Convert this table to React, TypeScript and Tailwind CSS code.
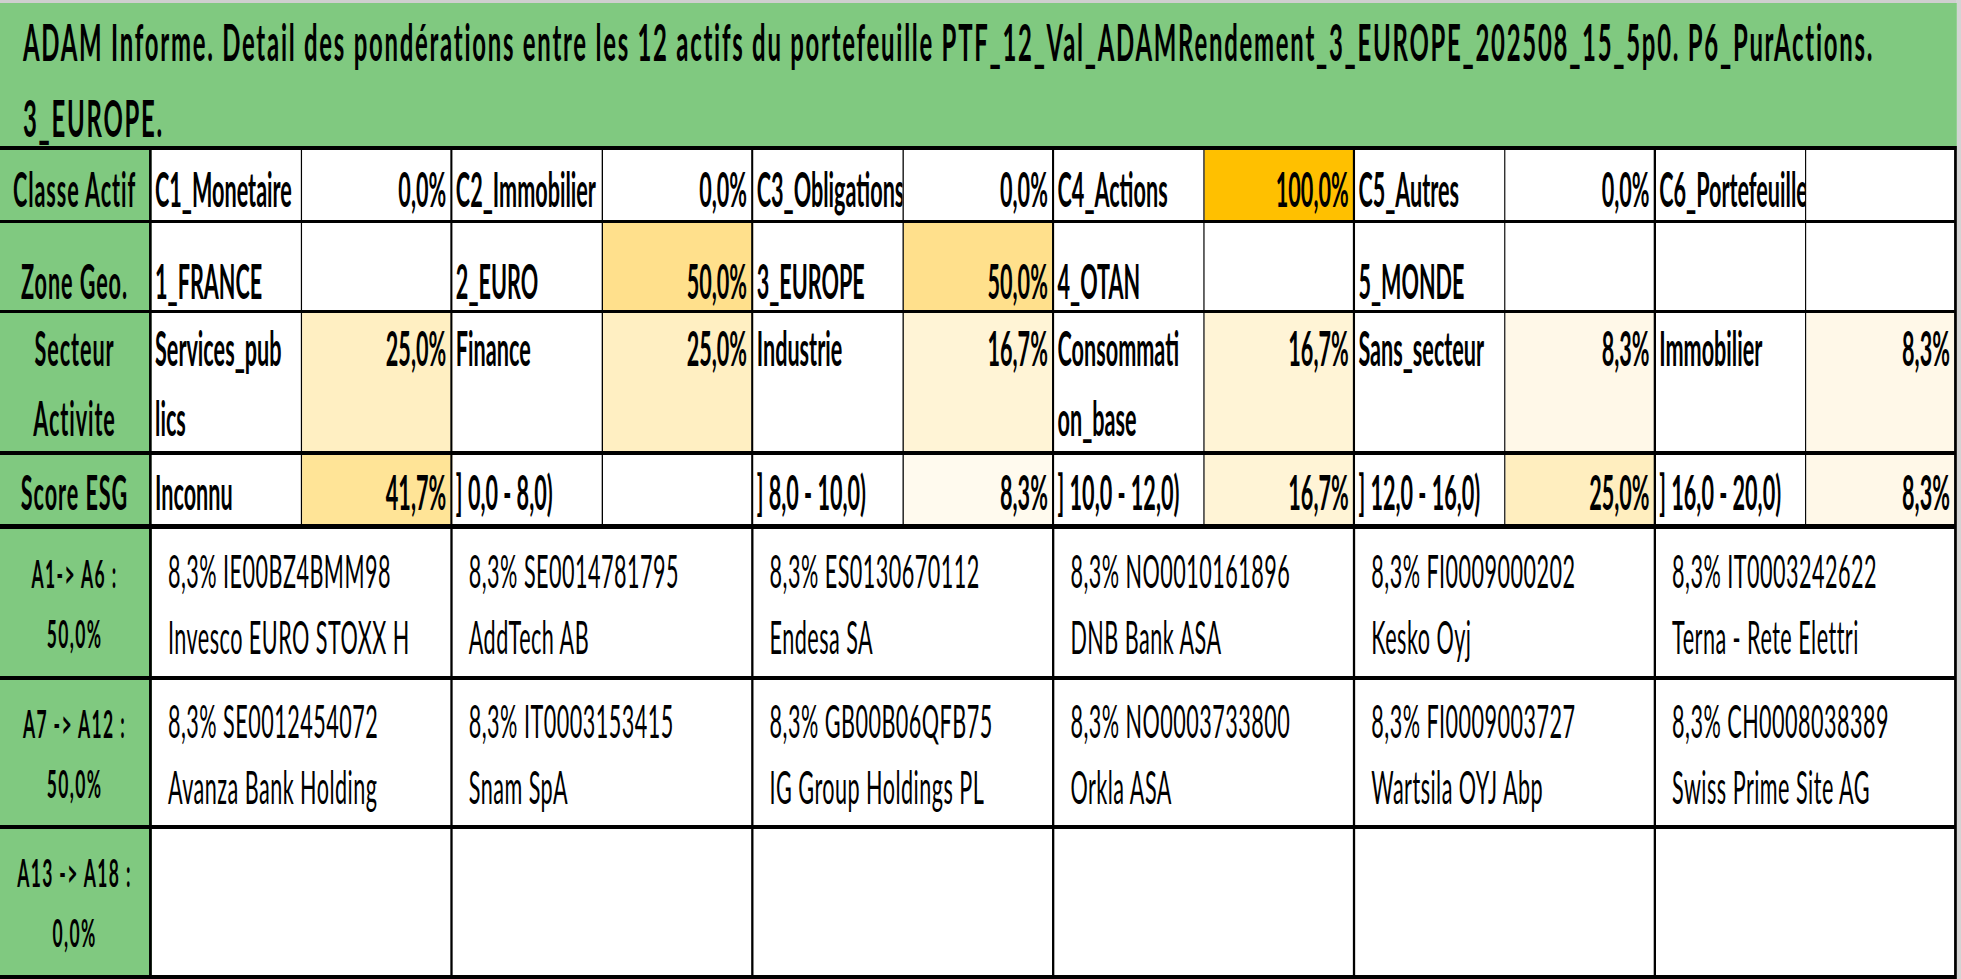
const font = "[font-family:Lato,'Open_Sans',sans-serif]";

type Pair = { name: string[]; value: string; bg: string };

const rows: { label: string[]; h: string; align: string; pairs: Pair[] }[] = [
  {
    label: ["Classe Actif"],
    h: "h-[73px] border-b-[3px]",
    align: "items-end pb-[3px] leading-[1.2]",
    pairs: [
      { name: ["C1_Monetaire"], value: "0,0%", bg: "bg-white" },
      { name: ["C2_Immobilier"], value: "0,0%", bg: "bg-white" },
      { name: ["C3_Obligations"], value: "0,0%", bg: "bg-white" },
      { name: ["C4_Actions"], value: "100,0%", bg: "bg-[#ffc000]" },
      { name: ["C5_Autres"], value: "0,0%", bg: "bg-white" },
      { name: ["C6_Portefeuilles"], value: "", bg: "bg-white" },
    ],
  },
  {
    label: ["Zone Geo."],
    h: "h-[90px] border-b-[3px]",
    align: "items-end pb-[1px] leading-[1.2]",
    pairs: [
      { name: ["1_FRANCE"], value: "", bg: "bg-white" },
      { name: ["2_EURO"], value: "50,0%", bg: "bg-[#ffe08c]" },
      { name: ["3_EUROPE"], value: "50,0%", bg: "bg-[#ffe08c]" },
      { name: ["4_OTAN"], value: "", bg: "bg-white" },
      { name: ["5_MONDE"], value: "", bg: "bg-white" },
      { name: [""], value: "", bg: "bg-white" },
    ],
  },
  {
    label: ["Secteur", "Activite"],
    h: "h-[142px] border-b-[4px]",
    align: "items-start pt-0 leading-[70px]",
    pairs: [
      { name: ["Services_pub", "lics"], value: "25,0%", bg: "bg-[#ffefc2]" },
      { name: ["Finance"], value: "25,0%", bg: "bg-[#ffefc2]" },
      { name: ["Industrie"], value: "16,7%", bg: "bg-[#fff4d6]" },
      { name: ["Consommati", "on_base"], value: "16,7%", bg: "bg-[#fff4d6]" },
      { name: ["Sans_secteur"], value: "8,3%", bg: "bg-[#fff8e8]" },
      { name: ["Immobilier"], value: "8,3%", bg: "bg-[#fff8e8]" },
    ],
  },
  {
    label: ["Score ESG"],
    h: "h-[74px] border-b-[5px]",
    align: "items-end pb-[4px] leading-[1.2]",
    pairs: [
      { name: ["Inconnu"], value: "41,7%", bg: "bg-[#ffe497]" },
      { name: ["] 0,0 - 8,0)"], value: "", bg: "bg-white" },
      { name: ["] 8,0 - 10,0)"], value: "8,3%", bg: "bg-[#fffaee]" },
      { name: ["] 10,0 - 12,0)"], value: "16,7%", bg: "bg-[#fff4d6]" },
      { name: ["] 12,0 - 16,0)"], value: "25,0%", bg: "bg-[#ffeebf]" },
      { name: ["] 16,0 - 20,0)"], value: "8,3%", bg: "bg-[#fff8e8]" },
    ],
  },
];

const assets: { label: string; total: string; h: string; items: [string, string][] }[] = [
  {
    label: "A1-> A6 :",
    total: "50,0%",
    h: "h-[151px]",
    items: [
      ["8,3% IE00BZ4BMM98", "Invesco EURO STOXX H"],
      ["8,3% SE0014781795", "AddTech AB"],
      ["8,3% ES0130670112", "Endesa SA"],
      ["8,3% NO0010161896", "DNB Bank ASA"],
      ["8,3% FI0009000202", "Kesko Oyj"],
      ["8,3% IT0003242622", "Terna - Rete Elettri"],
    ],
  },
  {
    label: "A7 -> A12 :",
    total: "50,0%",
    h: "h-[149px]",
    items: [
      ["8,3% SE0012454072", "Avanza Bank Holding"],
      ["8,3% IT0003153415", "Snam SpA"],
      ["8,3% GB00B06QFB75", "IG Group Holdings PL"],
      ["8,3% NO0003733800", "Orkla ASA"],
      ["8,3% FI0009003727", "Wartsila OYJ Abp"],
      ["8,3% CH0008038389", "Swiss Prime Site AG"],
    ],
  },
  {
    label: "A13 -> A18 :",
    total: "0,0%",
    h: "h-[150px]",
    items: [
      ["", ""],
      ["", ""],
      ["", ""],
      ["", ""],
      ["", ""],
      ["", ""],
    ],
  },
];

function Lines({ lines }: { lines: string[] }) {
  return (
    <span>
      {lines.map((l, i) => (
        <span key={i}>
          {i > 0 && <br />}
          {l}
        </span>
      ))}
    </span>
  );
}

export default function App() {
  return (
    <div className={`w-[1961px] h-[979px] overflow-hidden bg-[#d4d4d4] text-black ${font}`}>
      {/* the sheet is laid out wide, then squeezed horizontally like the exported picture */}
      <div className="w-[4254px] origin-top-left scale-x-[0.46] bg-white border-t-[3px] border-[#cfcfcf]">
        <div className="h-[147px] border-b-[4px] border-black bg-[#80c980] pl-[50px] text-[52px] font-bold leading-[76px] tracking-[3.8px] whitespace-nowrap overflow-hidden">
          ADAM Informe. Detail des pondérations entre les 12 actifs du portefeuille PTF_12_Val_ADAMRendement_3_EUROPE_202508_15_5p0. P6_PurActions.
          <br />
          3_EUROPE.
        </div>

        {rows.map((r) => (
          <div key={r.label[0]} className={`flex border-black text-[47px] font-bold ${r.h}`}>
            <div className={`flex w-[330px] shrink-0 justify-center text-center tracking-[2px] bg-[#80c980] border-r-[6px] border-black ${r.align}`}>
              <Lines lines={r.label} />
            </div>
            {r.pairs.map((p, i) => (
              <div key={i} className="flex">
                <div className={`flex w-[327px] shrink-0 pl-[7px] overflow-hidden whitespace-nowrap bg-white border-r-[3px] border-black ${r.align}`}>
                  <Lines lines={p.name} />
                </div>
                <div
                  className={`flex w-[327px] shrink-0 justify-end pr-[9px] border-black ${i === 5 ? "border-r-[6px]" : "border-r-[5px]"} ${p.bg} ${r.align}`}
                >
                  {p.value}
                </div>
              </div>
            ))}
          </div>
        ))}

        {assets.map((a) => (
          <div key={a.label} className={`flex border-b-[4px] border-black ${a.h}`}>
            <div className="flex w-[330px] shrink-0 items-center justify-center text-center bg-[#80c980] border-r-[6px] border-black text-[38px] font-bold leading-[60px] tracking-[3px]">
              <Lines lines={[a.label, a.total]} />
            </div>
            {a.items.map((it, i) => (
              <div
                key={i}
                className={`flex w-[654px] shrink-0 items-center pl-[35px] whitespace-nowrap overflow-hidden border-black text-[47px] leading-[66px] tracking-[1px] ${i === 5 ? "border-r-[6px]" : "border-r-[5px]"}`}
              >
                <Lines lines={it} />
              </div>
            ))}
          </div>
        ))}
      </div>
    </div>
  );
}
